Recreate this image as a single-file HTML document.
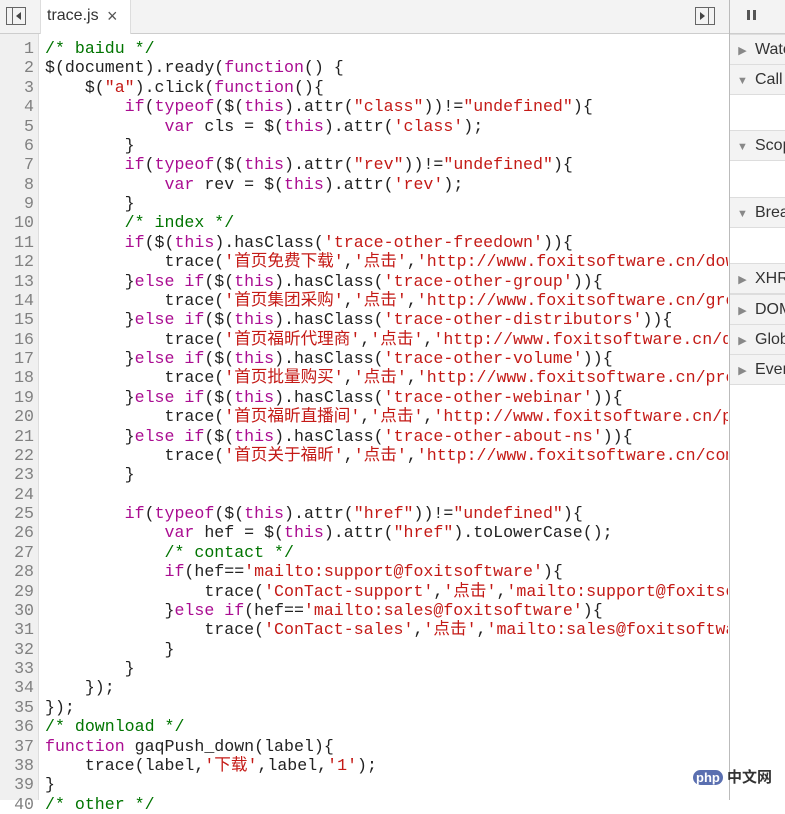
<!DOCTYPE html>
<html><head><meta charset="utf-8"><style>
body{margin:0;width:785px;height:800px;overflow:hidden;background:#fff;font-family:"Liberation Sans",sans-serif;position:relative}
#top{position:absolute;left:0;top:0;width:729px;height:33px;background:#f3f3f3;border-bottom:1px solid #cdcdcd}
#tab{position:absolute;left:40px;top:0;width:89px;height:34px;background:#fff;border-left:1px solid #ddd;border-right:1px solid #ddd;font-size:16px;color:#333}
#gut{position:absolute;left:0;top:34px;width:38px;height:766px;background:#f0f0f0;border-right:1px solid #ddd}
pre{margin:0;font-family:"Liberation Mono","Noto Sans CJK SC",monospace;font-size:16.6px;line-height:19.38px;position:absolute;top:39px;color:#222}
#nums{left:0;width:34px;text-align:right;color:#808080}
#code{left:45px;width:683px;overflow:hidden}
.c{color:#007400}.k{color:#aa0d91}.s{color:#c41a16}
#side{position:absolute;left:729px;top:0;width:56px;height:800px;background:#fff;border-left:1px solid #bbb}
.h{position:absolute;left:0;width:56px;height:29px;background:#f3f3f3;border-top:1px solid #ddd;border-bottom:1px solid #ddd;font-size:16px;color:#333;white-space:nowrap;overflow:hidden;line-height:29px}
.h i{font-style:normal;color:#888;font-size:11px;display:inline-block;width:25px;text-align:center}
</style></head><body>
<div id="top">
<svg style="position:absolute;left:6px;top:7px" width="20" height="18"><rect x="0.5" y="0.5" width="19" height="17" fill="none" stroke="#666"/><line x1="6.5" y1="1" x2="6.5" y2="17" stroke="#666"/><path d="M15 5 L10 9 L15 13Z" fill="#444"/></svg>
<svg style="position:absolute;left:695px;top:7px" width="20" height="18"><rect x="0.5" y="0.5" width="19" height="17" fill="none" stroke="#666"/><line x1="13.5" y1="1" x2="13.5" y2="17" stroke="#666"/><path d="M5 5 L10 9 L5 13Z" fill="#444"/></svg>
</div>
<div id="tab"><span style="position:absolute;left:6px;top:7px">trace.js</span><span style="position:absolute;left:66px;top:6px;font-size:18px;color:#555">×</span></div>
<div id="gut"></div>
<pre id="nums">1
2
3
4
5
6
7
8
9
10
11
12
13
14
15
16
17
18
19
20
21
22
23
24
25
26
27
28
29
30
31
32
33
34
35
36
37
38
39
40</pre>
<pre id="code"><span class="c">/* baidu */</span>
$(document).ready(<span class="k">function</span>() {
    $(<span class="s">"a"</span>).click(<span class="k">function</span>(){
        <span class="k">if</span>(<span class="k">typeof</span>($(<span class="k">this</span>).attr(<span class="s">"class"</span>))!=<span class="s">"undefined"</span>){
            <span class="k">var</span> cls = $(<span class="k">this</span>).attr(<span class="s">'class'</span>);
        }
        <span class="k">if</span>(<span class="k">typeof</span>($(<span class="k">this</span>).attr(<span class="s">"rev"</span>))!=<span class="s">"undefined"</span>){
            <span class="k">var</span> rev = $(<span class="k">this</span>).attr(<span class="s">'rev'</span>);
        }
        <span class="c">/* index */</span>
        <span class="k">if</span>($(<span class="k">this</span>).hasClass(<span class="s">'trace-other-freedown'</span>)){
            trace(<span class="s">'首页免费下载'</span>,<span class="s">'点击'</span>,<span class="s">'http://www.foxitsoftware.cn/downloads/'</span>
        }<span class="k">else if</span>($(<span class="k">this</span>).hasClass(<span class="s">'trace-other-group'</span>)){
            trace(<span class="s">'首页集团采购'</span>,<span class="s">'点击'</span>,<span class="s">'http://www.foxitsoftware.cn/group/'</span>
        }<span class="k">else if</span>($(<span class="k">this</span>).hasClass(<span class="s">'trace-other-distributors'</span>)){
            trace(<span class="s">'首页福昕代理商'</span>,<span class="s">'点击'</span>,<span class="s">'http://www.foxitsoftware.cn/distributors/'</span>
        }<span class="k">else if</span>($(<span class="k">this</span>).hasClass(<span class="s">'trace-other-volume'</span>)){
            trace(<span class="s">'首页批量购买'</span>,<span class="s">'点击'</span>,<span class="s">'http://www.foxitsoftware.cn/products/'</span>
        }<span class="k">else if</span>($(<span class="k">this</span>).hasClass(<span class="s">'trace-other-webinar'</span>)){
            trace(<span class="s">'首页福昕直播间'</span>,<span class="s">'点击'</span>,<span class="s">'http://www.foxitsoftware.cn/p'</span>
        }<span class="k">else if</span>($(<span class="k">this</span>).hasClass(<span class="s">'trace-other-about-ns'</span>)){
            trace(<span class="s">'首页关于福昕'</span>,<span class="s">'点击'</span>,<span class="s">'http://www.foxitsoftware.cn/company/'</span>
        }

        <span class="k">if</span>(<span class="k">typeof</span>($(<span class="k">this</span>).attr(<span class="s">"href"</span>))!=<span class="s">"undefined"</span>){
            <span class="k">var</span> hef = $(<span class="k">this</span>).attr(<span class="s">"href"</span>).toLowerCase();
            <span class="c">/* contact */</span>
            <span class="k">if</span>(hef==<span class="s">'mailto:support@foxitsoftware'</span>){
                trace(<span class="s">'ConTact-support'</span>,<span class="s">'点击'</span>,<span class="s">'mailto:support@foxitsoftware'</span>
            }<span class="k">else if</span>(hef==<span class="s">'mailto:sales@foxitsoftware'</span>){
                trace(<span class="s">'ConTact-sales'</span>,<span class="s">'点击'</span>,<span class="s">'mailto:sales@foxitsoftware'</span>
            }
        }
    });
});
<span class="c">/* download */</span>
<span class="k">function</span> gaqPush_down(label){
    trace(label,<span class="s">'下载'</span>,label,<span class="s">'1'</span>);
}
<span class="c">/* other */</span></pre>
<div id="side">
<div style="position:absolute;left:0;top:0;width:56px;height:33px;background:#f3f3f3;border-bottom:1px solid #cdcdcd"></div>
<div style="position:absolute;left:17px;top:10px;width:3px;height:10px;background:#555"></div>
<div style="position:absolute;left:23px;top:10px;width:3px;height:10px;background:#555"></div>
<div class="h" style="top:34px"><i>▶</i>Watch</div>
<div class="h" style="top:64px"><i>▼</i>Call Stack</div>
<div class="h" style="top:130px"><i>▼</i>Scope</div>
<div class="h" style="top:197px"><i>▼</i>Breakpoints</div>
<div class="h" style="top:263px"><i>▶</i>XHR</div>
<div class="h" style="top:294px"><i>▶</i>DOM</div>
<div class="h" style="top:324px"><i>▶</i>Global</div>
<div class="h" style="top:354px"><i>▶</i>Event</div>
</div>
<div style="position:absolute;left:693px;top:766px;font:bold 15px 'Liberation Sans','Noto Sans CJK SC',sans-serif;color:#333"><span style="background:#5a6fb0;color:#fff;border-radius:10px;padding:0 3px;font-size:13px">php</span> 中文网</div>
</body></html>
